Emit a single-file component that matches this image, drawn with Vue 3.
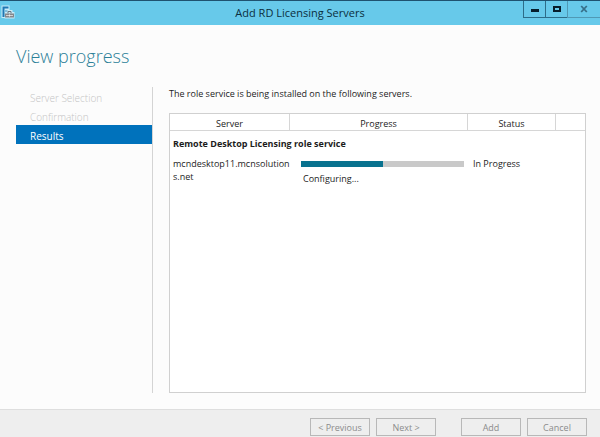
<script setup>
const steps = [
  { name: 'Server Selection', current: false },
  { name: 'Confirmation', current: false },
  { name: 'Results', current: true },
]
const servers = [
  { name: 'mcndesktop11.mcnsolutions.net', progress: 50, step: 'Configuring...', status: 'In Progress' },
]
</script>

<template>
  <div class="window">
    <header class="titlebar">
      <svg class="app-icon" viewBox="0 0 14 14" aria-hidden="true">
        <path d="M0.5 0.5H8.5V5H11.5V7H13.5V13.5H3.5V13H0.5Z" fill="#c9ebf8" />
        <path d="M1.5 1.5H7.5V3.5H3.5V12H1.5Z" fill="#1f78b4" />
        <path d="M3.5 5H6.5V7H3.5Z" fill="#7fbfe0" />
        <path d="M7 8.5V6.5H10V8.5" fill="none" stroke="#6b7580" />
        <path d="M4 8.5H13V12.5H4Z" fill="#85878c" />
        <path d="M5 10.5H12" stroke="#cfd1d4" />
        <path d="M8 9.5H9V11.5H8Z" fill="#eceded" />
      </svg>
      <h1 class="title">Add RD Licensing Servers</h1>
      <div class="controls">
        <button class="control" type="button" aria-label="Minimize">
          <svg viewBox="0 0 10 8"><path d="M1 4H9V7H1Z" fill="#071d2b" /></svg>
        </button>
        <button class="control" type="button" aria-label="Maximize">
          <svg viewBox="0 0 10 8"><path d="M2 2H8V6H2Z" fill="none" stroke="#071d2b" stroke-width="2" /></svg>
        </button>
        <button class="control close" type="button" aria-label="Close" disabled>
          <svg viewBox="0 0 10 8"><path d="M2.2 1L7.8 7M7.8 1L2.2 7" stroke="#376f89" stroke-width="1.8" /></svg>
        </button>
      </div>
    </header>

    <h2 class="heading">View progress</h2>

    <div class="body">
      <nav class="steps" aria-label="Steps">
        <button
          v-for="step in steps"
          :key="step.name"
          class="step"
          :class="{ current: step.current }"
          type="button"
          :disabled="!step.current"
        >{{ step.name }}</button>
      </nav>
      <main class="content">
        <p class="intro">The role service is being installed on the following servers.</p>
        <div class="panel">
          <table class="servers">
            <colgroup>
              <col class="col-server" />
              <col />
              <col class="col-status" />
              <col class="col-end" />
            </colgroup>
            <thead>
              <tr>
                <th>Server</th>
                <th>Progress</th>
                <th>Status</th>
                <th></th>
              </tr>
            </thead>
            <tbody>
              <tr>
                <td class="group" colspan="4">Remote Desktop Licensing role service</td>
              </tr>
              <tr v-for="server in servers" :key="server.name">
                <td class="name">{{ server.name }}</td>
                <td class="progress">
                  <div class="track" role="progressbar" :aria-label="server.name" :aria-valuenow="server.progress">
                    <div class="fill" :style="{ width: server.progress + '%' }"></div>
                  </div>
                  <div class="phase">{{ server.step }}</div>
                </td>
                <td class="status">{{ server.status }}</td>
                <td></td>
              </tr>
            </tbody>
          </table>
        </div>
      </main>
    </div>

    <footer class="footer">
      <div class="pair">
        <button class="action" type="button" disabled>&lt; Previous</button>
        <button class="action" type="button" disabled>Next &gt;</button>
      </div>
      <div class="pair">
        <button class="action" type="button" disabled>Add</button>
        <button class="action" type="button" disabled>Cancel</button>
      </div>
    </footer>
  </div>
</template>

<style>
body {
  margin: 0;
}
</style>

<style scoped>
.window {
  box-sizing: border-box;
  display: flex;
  flex-direction: column;
  min-height: 100vh;
  border-top: 1px solid #1f5270;
  background: #fcfcfc;
  color: #1c1c1c;
  font: 9px/13px "Open Sans", "Noto Sans", sans-serif;
}

button {
  margin: 0;
  padding: 0;
  border: 0;
  border-radius: 0;
  background: none;
  color: inherit;
  font: inherit;
}

.titlebar {
  display: grid;
  grid-template-columns: 1fr auto 1fr;
  height: 24px;
  background: #67c9ea;
}

.app-icon {
  width: 14px;
  height: 14px;
  margin: 4px 0 0 1px;
}

.title {
  margin: 0;
  color: #0b2f40;
  font-size: 11px;
  font-weight: 400;
  line-height: 24px;
}

.controls {
  display: flex;
  justify-self: end;
  height: 17px;
}

.control {
  box-sizing: border-box;
  display: flex;
  align-items: center;
  justify-content: center;
  width: 22px;
  border: solid #2d6c88;
  border-width: 0 0 1px 1px;
}

.control.close {
  width: 33px;
  border-color: #5099b5;
}

.control svg {
  width: 10px;
  height: 8px;
}

.heading {
  margin: 0;
  padding: 18px 16px 0;
  color: #2b8098;
  font-size: 18px;
  font-weight: 300;
  line-height: 26px;
}

.body {
  display: flex;
  flex: 1;
  gap: 16px;
  padding: 18px 14px 16px 16px;
}

.steps {
  display: flex;
  flex-direction: column;
  width: 136px;
  border-right: 1px solid #d4d4d4;
}

.step {
  height: 19px;
  padding: 3px 0 0 14px;
  color: #c4c4c4;
  font-size: 10px;
  font-weight: 300;
  text-align: left;
}

.step.current {
  background: #0072bc;
  color: #ffffff;
  font-weight: 400;
}

.content {
  display: flex;
  flex: 1;
  flex-direction: column;
}

.intro {
  margin: 0 0 13px;
}

.panel {
  flex: 1;
  border: 1px solid #d0d0d0;
  background: #ffffff;
}

.servers {
  width: 100%;
  border-collapse: separate;
  border-spacing: 0;
  table-layout: fixed;
}

.col-server {
  width: 120px;
}

.col-status {
  width: 88px;
}

.col-end {
  width: 29px;
}

th {
  height: 14px;
  padding: 2px 0 0;
  border: solid #d6d6d6;
  border-width: 0 1px 1px 0;
  font-weight: 400;
}

th:last-child {
  border-right: 0;
}

td {
  padding: 0;
  vertical-align: top;
}

td.group {
  padding: 6px 3px 7px;
  font-weight: 700;
}

.name {
  padding-left: 3px;
  overflow-wrap: anywhere;
}

.progress {
  padding: 4px 4px 0 11px;
}

.track {
  height: 6px;
  background: #c9c9c9;
}

.fill {
  height: 6px;
  background: #08728f;
}

.phase {
  padding: 5px 2px 0;
}

.status {
  padding-left: 5px;
}

.footer {
  display: flex;
  justify-content: flex-end;
  gap: 25px;
  padding: 8px 13px 1px;
  border-top: 1px solid #dedede;
  background: #eeeeee;
}

.pair {
  display: flex;
  gap: 6px;
}

.action {
  box-sizing: border-box;
  width: 60px;
  height: 18px;
  border: 1px solid #b8b8b8;
  color: #8c8c8c;
}
</style>
